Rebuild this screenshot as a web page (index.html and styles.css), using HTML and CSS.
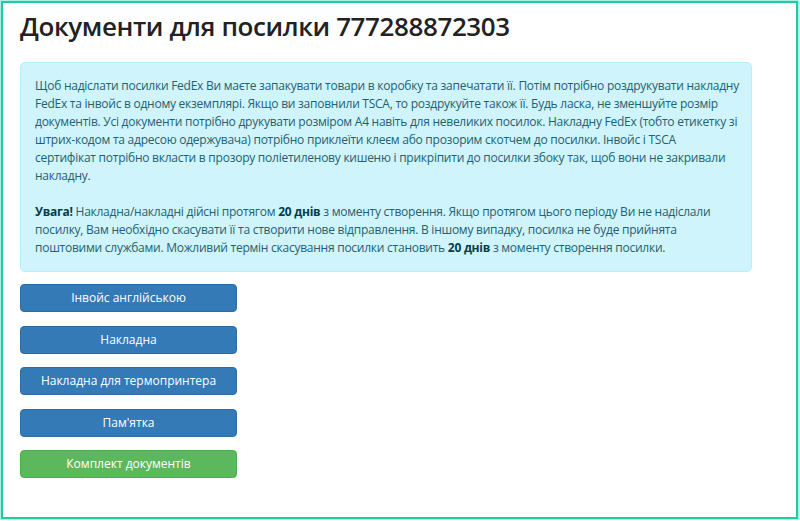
FILE: index.html
```html
<!DOCTYPE html>
<html lang="uk">
<head>
<meta charset="utf-8">
<title>Документи для посилки 777288872303</title>
<link rel="stylesheet" href="styles.css">
</head>
<body>
<div class="frame">
  <h1 class="title">Документи для посилки 777288872303</h1>
  <div class="alert">
    Щоб надіслати посилки FedEx Ви маєте запакувати товари в коробку та запечатати її. Потім потрібно роздрукувати накладну FedEx та інвойс в одному екземплярі. Якщо ви заповнили TSCA, то роздрукуйте також її. Будь ласка, не зменшуйте розмір документів. Усі документи потрібно друкувати розміром А4 навіть для невеликих посилок. Накладну FedEx (тобто етикетку зі штрих-кодом та адресою одержувача) потрібно приклеїти клеєм або прозорим скотчем до посилки. Інвойс і TSCA сертифікат&nbsp;потрібно вкласти в прозору поліетиленову кишеню і прикріпити до посилки збоку так, щоб вони не закривали накладну.<br><br>
    <b>Увага!</b> Накладна/накладні дійсні протягом <b>20 днів</b> з моменту створення. Якщо протягом цього періоду Ви не надіслали посилку, Вам необхідно скасувати її та створити нове відправлення. В іншому випадку, посилка не буде прийнята поштовими службами. Можливий термін скасування посилки становить <b>20 днів</b> з моменту створення посилки.
  </div>
  <div class="buttons">
    <a class="btn btn-primary" href="#">Інвойс англійською</a>
    <a class="btn btn-primary" href="#">Накладна</a>
    <a class="btn btn-primary" href="#">Накладна для термопринтера</a>
    <a class="btn btn-primary" href="#">Пам'ятка</a>
    <a class="btn btn-success" href="#">Комплект документів</a>
  </div>
</div>
</body>
</html>
```

FILE: styles.css
```css
html, body {
  margin: 0;
  padding: 0;
  background: #ffffff;
}
body {
  font-family: "Open Sans", "Noto Sans", sans-serif;
  color: #333333;
}
.frame {
  box-sizing: border-box;
  width: 797px;
  height: 518px;
  margin: 1px;
  border: 2px solid #22c9a2;
  box-shadow: 0 0 1px 1px #a8f2e0;
  padding: 6px 17px 0 17px;
}
.title {
  margin: 0 0 19px 0;
  font-size: 26px;
  line-height: 34px;
  font-weight: 600;
  letter-spacing: -0.4px;
  color: #222222;
}
.alert {
  box-sizing: border-box;
  width: 732px;
  padding: 14px 10px 14px 14px;
  border: 1px solid #b6effb;
  border-radius: 5px;
  background: #cff4fc;
  color: #24616f;
  font-size: 12px;
  line-height: 18px;
  letter-spacing: -0.25px;
  margin-bottom: 12px;
}
.alert b {
  color: #053e4a;
  font-weight: 700;
}
.buttons {
  display: flex;
  flex-direction: column;
  gap: 13.5px;
}
.btn {
  box-sizing: border-box;
  display: block;
  width: 217px;
  height: 28px;
  line-height: 26px;
  text-align: center;
  font-size: 12px;
  color: #ffffff;
  text-decoration: none;
  border-radius: 4px;
  border: 1px solid transparent;
}
.btn-primary {
  background: #337ab7;
  border-color: #2e6da4;
}
.btn-success {
  background: #5cb85c;
  border-color: #4cae4c;
}
```
